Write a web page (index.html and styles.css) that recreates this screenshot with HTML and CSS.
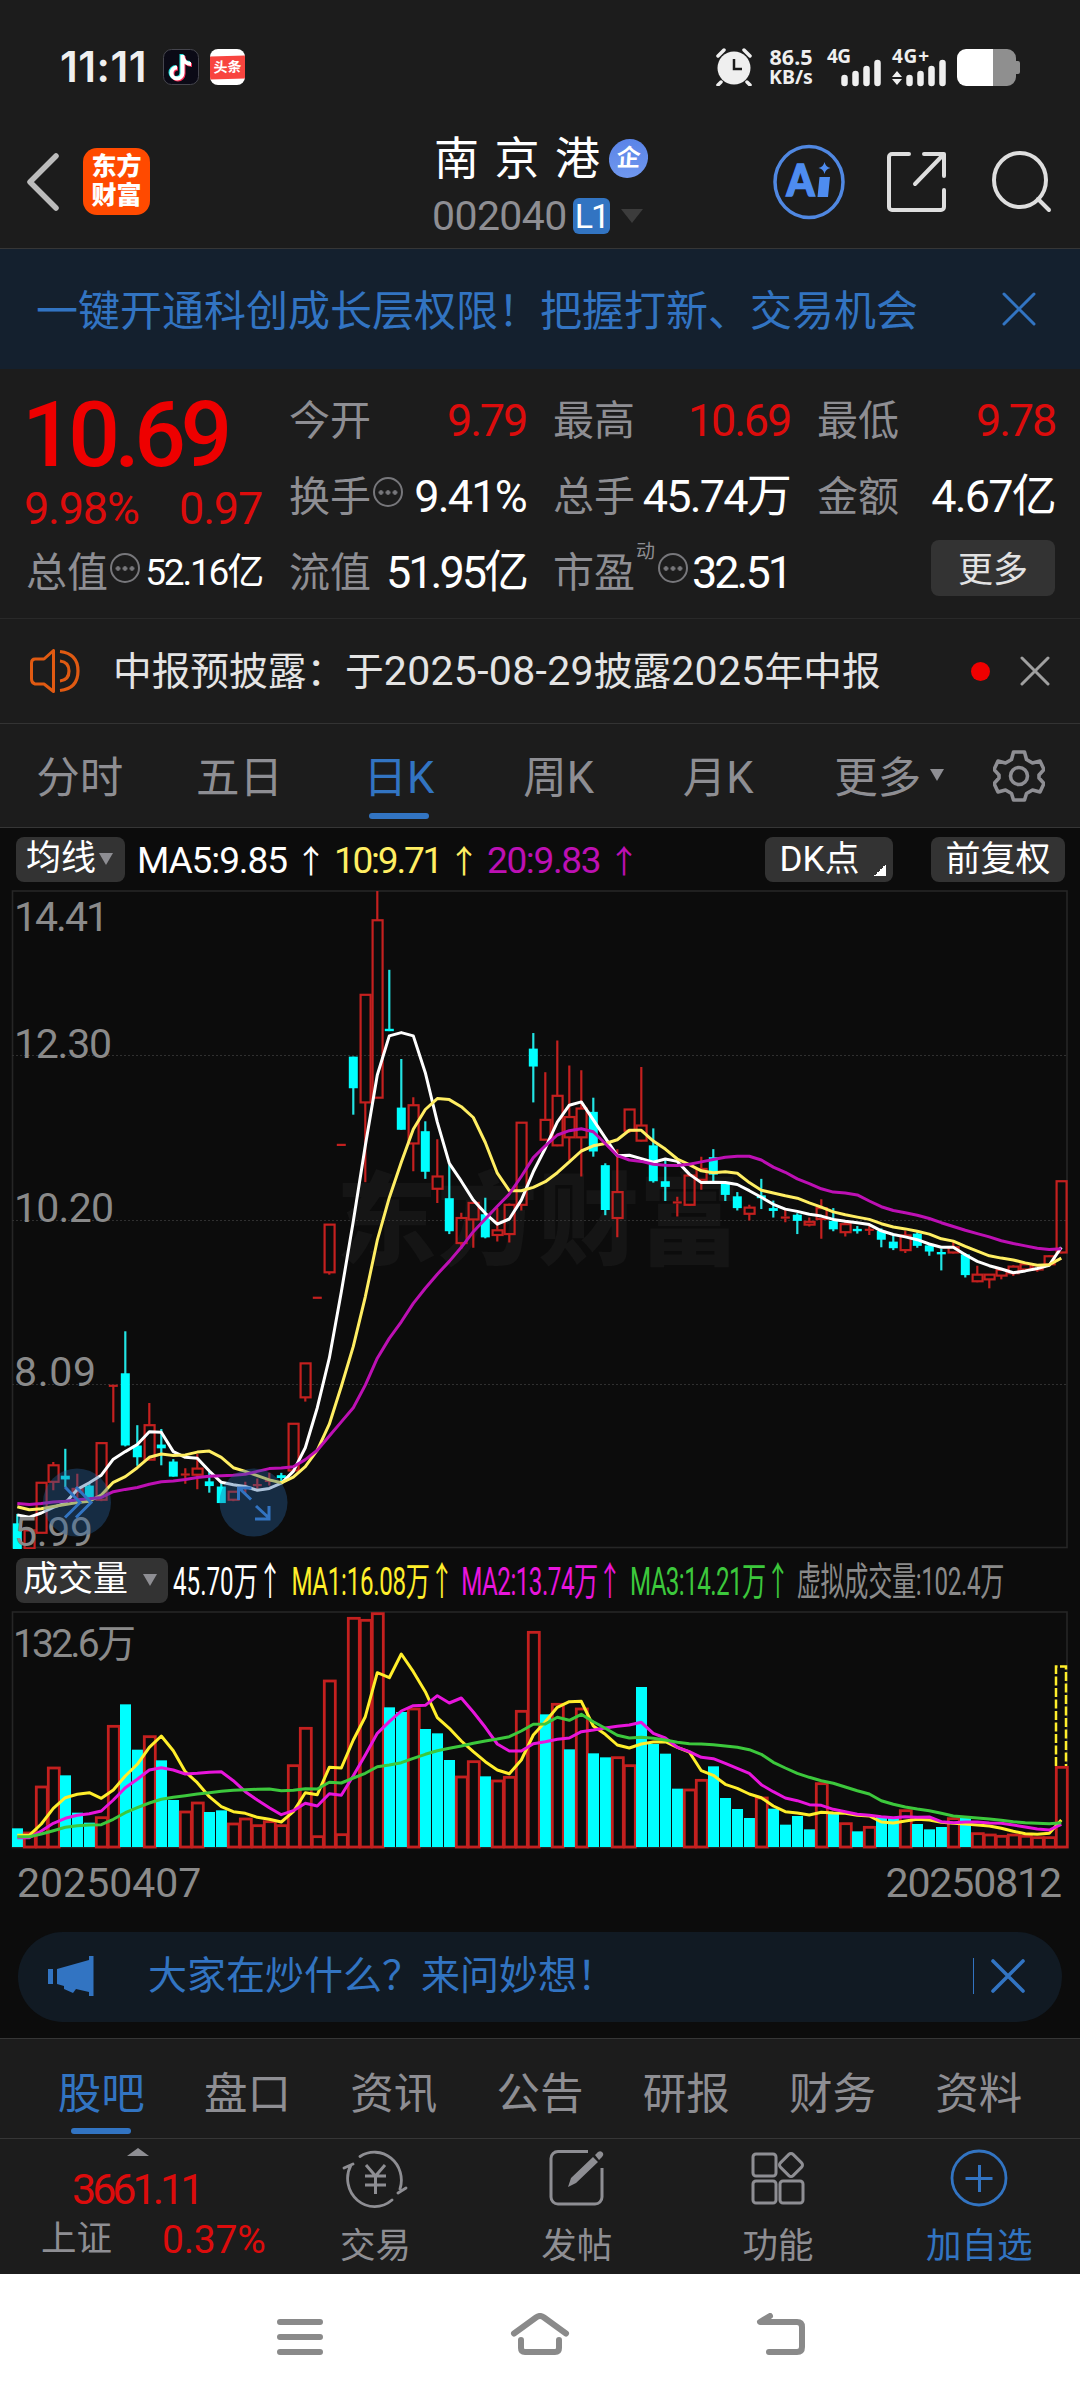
FILE: index.html
```html
<!DOCTYPE html>
<html lang="zh-CN">
<head>
    <meta charset="UTF-8">
    <meta name="viewport" content="width=device-width, initial-scale=1.0">
    <title>南京港 002040</title>
    <link rel="stylesheet" href="styles.css">
</head>
<body>
    <div class="statusbar">
        <span class="clock">11:11</span>
        <svg class="app-icon" width="36" height="36" viewBox="0 0 36 36">
            <rect x="0.5" y="0.5" width="35" height="35" rx="8" fill="#0b0a16" stroke="#45454d"/>
            <g fill="none" stroke-width="4">
                <path d="M18.500 5v18.500a5.500 5.500 0 1 1-5.500-5.500M18.500 6c.5 5 4 8 8.500 8" stroke="#25e5e0"/>
                <path d="M20.500 7v18a5.500 5.500 0 1 1-5.500-5.500M20.500 8c.5 5 4 8 8.500 8" stroke="#fb2c55"/>
                <path d="M19.500 6v18a5.500 5.500 0 1 1-5.500-5.500M19.500 7c.5 5 4 8 8.500 8" stroke="#fff"/>
            </g>
        </svg>
        <span class="toutiao"><b>头条</b></span>
        <div class="status-right">
            <svg width="38" height="38" viewBox="0 0 38 38">
                <circle cx="19" cy="20" r="16.500" fill="#efefef"/>
                <path d="M3 8l6-6M35 8l-6-6M6 34l-3 3M32 34l3 3" stroke="#efefef" stroke-width="3.500" stroke-linecap="round"/>
                <path d="M19 11v10h8" fill="none" stroke="#1c1c1c" stroke-width="2.500"/>
            </svg>
            <div class="speed"><span>86.5</span><span>KB/s</span></div>
            <svg class="sig" width="56" height="38" viewBox="0 0 56 38">
                <text x="0" y="15" class="net" textLength="24">4G</text>
                <path d="M17.500 30v5M28.500 26v9M39.500 21v14M50.500 15v20" stroke="#efefef" stroke-width="6.500" stroke-linecap="round"/>
            </svg>
            <svg class="sig" width="56" height="38" viewBox="0 0 56 38">
                <text x="0" y="15" class="net" textLength="37">4G+</text>
                <path d="M5 23l5 6H0zM5 37l5-6H0z" fill="#efefef"/>
                <path d="M17.500 30v5M28.500 26v9M39.500 21v14M50.500 15v20" stroke="#efefef" stroke-width="6.500" stroke-linecap="round"/>
            </svg>
            <svg width="63" height="37" viewBox="0 0 63 37">
                <path d="M36 0h14a9 9 0 0 1 9 9v3h2a2 2 0 0 1 2 2v9a2 2 0 0 1-2 2h-2v3a9 9 0 0 1-9 9H36z" fill="#8f8f8f"/>
                <path d="M36 0H9a9 9 0 0 0-9 9v19a9 9 0 0 0 9 9h27z" fill="#fff"/>
            </svg>
        </div>
    </div>

    <div class="header">
        <svg class="back" width="34" height="58" viewBox="0 0 34 58"><path d="M30 3L4 29l26 26" fill="none" stroke="#bcbcbc" stroke-width="5.500" stroke-linecap="round" stroke-linejoin="round"/></svg>
        <div class="logo">东方<br>财富</div>
        <div class="title">
            <div class="name"><span>南京港</span><i class="qi">企</i></div>
            <div class="code"><span>002040</span><b>L1</b><svg width="22" height="14" viewBox="0 0 22 14"><path d="M0 0h22L11 14z" fill="#3c3c3c"/></svg></div>
        </div>
        <svg class="ai" width="72" height="76" viewBox="0 0 72 76">
            <ellipse cx="36" cy="38" rx="34" ry="35.500" fill="none" stroke="#5088e2" stroke-width="3.500"/>
            <text x="13.500" y="51.500" class="ai-text" textLength="28" lengthAdjust="spacingAndGlyphs">A</text>
            <path d="M46.500 33H57l-2 20H44.500zM51.500 18q1 5 6 6q-5 1-6 6q-1-5-6-6q5-1 6-6z" fill="#4e8cf0"/>
        </svg>
        <svg class="share" width="60" height="60" viewBox="0 0 60 60"><path d="M22 2H5a3 3 0 0 0-3 3v50a3 3 0 0 0 3 3h49a3 3 0 0 0 3-3V38M37 2h20v22M56 3L28 32" fill="none" stroke="#dedede" stroke-width="4" stroke-linecap="round" stroke-linejoin="round"/></svg>
        <svg class="search" width="60" height="62" viewBox="0 0 60 62"><ellipse cx="28" cy="29" rx="26" ry="27" fill="none" stroke="#dedede" stroke-width="4"/><path d="M46 48l11 11" stroke="#dedede" stroke-width="4" stroke-linecap="round"/></svg>
    </div>

    <div class="promo">
        <span>一键开通科创成长层权限！把握打新、交易机会</span>
        <svg width="34" height="34" viewBox="0 0 34 34"><path d="M2 2l30 30M32 2L2 32" stroke="#3274c2" stroke-width="3" stroke-linecap="round"/></svg>
    </div>

    <div class="quote">
        <div class="quote-main">
            <div class="price">10.69</div>
            <div class="change"><span>9.98%</span><span>0.97</span></div>
            <div class="cell"><label>总值</label><i class="more-dot"></i><b class="small">52.16亿</b></div>
        </div>
        <div class="quote-grid">
            <div class="cell"><label>今开</label><b class="red">9.79</b></div>
            <div class="cell"><label>最高</label><b class="red">10.69</b></div>
            <div class="cell"><label>最低</label><b class="red">9.78</b></div>
            <div class="cell"><label>换手</label><i class="more-dot"></i><b>9.41%</b></div>
            <div class="cell"><label>总手</label><b>45.74万</b></div>
            <div class="cell"><label>金额</label><b>4.67亿</b></div>
            <div class="cell"><label>流值</label><b class="tight">51.95亿</b></div>
            <div class="cell"><label>市盈</label><sup>动</sup><i class="more-dot"></i><b class="tight">32.51</b></div>
            <div class="cell"><button class="more-btn">更多</button></div>
        </div>
    </div>

    <div class="notice">
        <svg width="50" height="44" viewBox="0 0 50 44">
            <path d="M23.500 1.500v41L14 35H5q-3.500-1-3.500-5V14q0-4 3.500-4h9z" fill="none" stroke="#e05a12" stroke-width="3" stroke-linejoin="round"/>
            <path d="M30 12q9 1 9 10t-9 10M30 2.500q18 2 18 19.500T30 41.500" fill="none" stroke="#e05a12" stroke-width="3.200"/>
        </svg>
        <span class="notice-text">中报预披露：于<em>2025-08-29</em>披露<em>2025</em>年中报</span>
        <i class="dot"></i>
        <svg width="30" height="30" viewBox="0 0 30 30"><path d="M2 2l26 26M28 2L2 28" stroke="#a0a0a0" stroke-width="3" stroke-linecap="round"/></svg>
    </div>

    <div class="tabs">
        <a>分时</a>
        <a>五日</a>
        <a class="active">日K</a>
        <a>周K</a>
        <a>月K</a>
        <a>更多<i class="caret"></i></a>
        <svg width="52" height="52" viewBox="0 0 52 52">
            <path d="M20.500 2h11l2 7.500 6 3.500 7.500-2 4 8.500-5 5.500v3l5 5.500-4 8.500-7.500-2-6 3.500-2 6.500h-11l-2-6.500-6-3.500-7.500 2-4-8.500 5-5.500v-3l-5-5.500 4-8.500 7.500 2 6-3.500z" fill="none" stroke="#8e8e93" stroke-width="3.600" stroke-linejoin="round"/>
            <circle cx="26" cy="26" r="8.500" fill="none" stroke="#8e8e93" stroke-width="3.600"/>
        </svg>
    </div>

    <div class="chart-area">
        <div class="ma-bar">
            <button class="pick">均线<i></i></button>
            <svg class="ma-values" width="520" height="62">
                <text x="0" y="45" textLength="190" fill="#fff">MA5:9.85 <tspan>↑</tspan></text>
                <text x="197" y="45" textLength="146" fill="#ffee63">10:9.71 <tspan>↑</tspan></text>
                <text x="350" y="45" textLength="153" fill="#bd10b4">20:9.83 <tspan>↑</tspan></text>
            </svg>
            <button class="dk">DK点</button>
            <button class="fq">前复权</button>
        </div>
        <svg id="kline" width="1080" height="659"></svg>
        <div class="vol-bar">
            <button class="pick">成交量<i></i></button>
            <svg class="vol-values" width="880" height="62">
                <g transform="scale(.62 1)">
                    <text x="8" y="46" textLength="176" fill="#fff">45.70万↑</text>
                    <text x="199" y="46" textLength="262" fill="#ffee2b">MA1:16.08万↑</text>
                    <text x="473" y="46" textLength="259" fill="#e815dc">MA2:13.74万↑</text>
                    <text x="745" y="46" textLength="258" fill="#3cc83c">MA3:14.21万↑</text>
                    <text x="1014" y="46" textLength="335" fill="#8a8a8a">虚拟成交量:102.4万</text>
                </g>
            </svg>
        </div>
        <svg id="volume" width="1080" height="239"></svg>
        <div class="dates"><span>20250407</span><span class="last">20250812</span></div>
        <div class="ask">
            <svg width="46" height="40" viewBox="0 0 46 40"><path d="M0 13h5v15H0zM9 13L41 4V0h4.500v40H41v-4l-13-3-3 4-9-4v-3l-7-2z" fill="#3274c2"/></svg>
            <span>大家在炒什么？来问妙想！</span>
            <i class="line"></i>
            <svg width="34" height="34" viewBox="0 0 34 34"><path d="M2 2l30 30M32 2L2 32" stroke="#3274c2" stroke-width="3.600" stroke-linecap="round"/></svg>
        </div>
    </div>

    <div class="tabs info-tabs">
        <a class="active">股吧</a>
        <a>盘口</a>
        <a>资讯</a>
        <a>公告</a>
        <a>研报</a>
        <a>财务</a>
        <a>资料</a>
    </div>

    <div class="bottom">
        <div class="index">
            <svg width="22" height="8" viewBox="0 0 22 8"><path d="M11 0l11 8H0z" fill="#8e8e93"/></svg>
            <div class="index-value">3661.11</div>
            <div class="index-row"><span>上证</span><b>0.37%</b></div>
        </div>
        <div class="action">
            <svg width="66" height="60" viewBox="0 0 66 60">
                <path d="M18 8.500A27 28 0 0 1 58 41M50 52A27 28 0 0 1 9 17M2 20l9-4M64 40l-8 5" fill="none" stroke="#8e8e93" stroke-width="2.800" stroke-linecap="round"/>
                <path d="M24 17l9.500 11L43 17M23 28h21M23 37h21M33.500 28v18" fill="none" stroke="#8e8e93" stroke-width="3"/>
            </svg>
            <span>交易</span>
        </div>
        <div class="action">
            <svg width="56" height="58" viewBox="0 0 56 58">
                <path d="M39 2.500H9a7 7 0 0 0-7 7V48a7 7 0 0 0 7 7h37a7 7 0 0 0 7-7V19" fill="none" stroke="#8e8e93" stroke-width="3"/>
                <path d="M19 38l3-9 22-21 5 5-22 21zM46 6l3-3q3-2 5 1 1 2-1 4l-3 3z" fill="#8e8e93"/>
            </svg>
            <span>发帖</span>
        </div>
        <div class="action">
            <svg width="54" height="58" viewBox="0 0 54 58">
                <g fill="none" stroke="#8e8e93" stroke-width="3">
                    <rect x="2" y="5" width="23" height="22" rx="3"/>
                    <rect x="2" y="32" width="23" height="22" rx="3"/>
                    <rect x="29" y="32" width="23" height="22" rx="3"/>
                    <rect x="31" y="7" width="18" height="18" rx="3" transform="rotate(45 40 16)"/>
                </g>
            </svg>
            <span>功能</span>
        </div>
        <div class="action add">
            <svg width="58" height="58" viewBox="0 0 58 58"><circle cx="29" cy="29" r="27" fill="none" stroke="#3274c2" stroke-width="2.800"/><path d="M15.500 29.500h27M29.500 16v27" stroke="#3274c2" stroke-width="3"/></svg>
            <span>加自选</span>
        </div>
    </div>

    <div class="navbar">
        <svg width="48" height="48" viewBox="0 0 48 48"><path d="M4 9h40M4 24h40M4 39h40" stroke="#8a8a8a" stroke-width="6" stroke-linecap="round"/></svg>
        <svg width="60" height="48" viewBox="0 0 60 48"><path d="M4 20.500L26 4.500q4-3 8 0l22 16M11 27v8q0 4 4 4h30q4 0 4-4v-8" fill="none" stroke="#8a8a8a" stroke-width="6" stroke-linecap="round"/></svg>
        <svg width="50" height="48" viewBox="0 0 50 48"><path d="M14 3L4 9h37q5 0 5 5v20q0 5-5 5H13" fill="none" stroke="#8a8a8a" stroke-width="6" stroke-linecap="round" stroke-linejoin="round"/></svg>
    </div>

    <script src="chart.js"></script>
</body>
</html>
```

FILE: styles.css
```css
* {
    box-sizing: border-box;
}
body {
    margin: 0;
    width: 1080px;
    background-color: #1c1c1c;
    color: #fff;
    font-family: Roboto, "Noto Sans CJK SC", sans-serif;
    line-height: 1;
}
svg {
    display: block;
    flex: none;
}
i,
em {
    font-style: normal;
}
button {
    font-family: inherit;
    color: #fff;
    background-color: #333;
    border: none;
    border-radius: 8px;
    padding: 0;
}

/* status bar */
.statusbar {
    height: 98px;
    padding: 36px 60px 0 60px;
    display: flex;
    align-items: center;
}
.clock {
    width: 103px;
    font-family: Inter, sans-serif;
    font-weight: 600;
    font-size: 42px;
    letter-spacing: 0.5px;
    color: #efefef;
}
.app-icon {
    margin-right: 11px;
}
.toutiao {
    width: 35px;
    height: 36px;
    border-radius: 8px;
    background-color: #fff;
    display: flex;
    align-items: center;
    overflow: hidden;
}
.toutiao b {
    width: 35px;
    height: 23px;
    background-color: #f8443f;
    font-size: 14px;
    line-height: 22px;
    text-align: center;
    transform: skewY(-2deg);
}
.status-right {
    margin-left: auto;
    display: flex;
    align-items: center;
}
.speed {
    width: 48px;
    margin: 0 12px 0 14px;
    font-family: "Noto Sans", sans-serif;
    font-weight: 700;
    font-size: 21.5px;
    line-height: 20px;
    text-align: center;
    color: #efefef;
}
.speed span {
    display: block;
}
.speed span + span {
    font-size: 19.5px;
}
.sig {
    margin-right: 9px;
    overflow: visible;
}
.net {
    font: 700 19px "Noto Sans", sans-serif;
    fill: #efefef;
}

/* header */
.header {
    height: 151px;
    border-bottom: 1px solid #363636;
    display: flex;
    align-items: center;
    padding: 17px 28px 0 26px;
}
.logo {
    width: 67px;
    height: 67px;
    margin-left: 23px;
    border-radius: 14px;
    background-color: #ff4a00;
    font-size: 25px;
    font-weight: 900;
    line-height: 29px;
    padding-top: 4px;
    text-align: center;
}
.title {
    margin-left: 282px;
    margin-top: 11px;
    width: 230px;
}
.name {
    display: flex;
    align-items: center;
    height: 58px;
    font-size: 45px;
    letter-spacing: 15.5px;
}
.name span {
    margin-left: 2px;
    margin-top: 2px;
}
.qi {
    width: 39px;
    height: 39px;
    margin-left: -7px;
    border-radius: 50%;
    background: linear-gradient(#5a84e8, #7097ee);
    font-size: 24px;
    line-height: 38px;
    letter-spacing: 0;
    text-align: center;
    font-weight: 700;
    transform: skewX(-4deg);
}
.code {
    display: flex;
    align-items: center;
    height: 58px;
    font-size: 41px;
    color: #8e8e93;
}
.code span {
    width: 141px;
    letter-spacing: -0.6px;
}
.code b {
    width: 37px;
    height: 36px;
    border-radius: 6px;
    background-color: #3274c2;
    color: #fff;
    font-weight: 400;
    font-size: 34px;
    line-height: 37px;
    letter-spacing: -2px;
    text-align: center;
    margin-right: 11px;
}
.ai {
    margin-left: 111px;
}
.ai-text {
    font: 900 44px Lato, sans-serif;
    fill: #4e8cf0;
    stroke: #4e8cf0;
    stroke-width: 1.5px;
}
.share {
    margin-left: 42px;
}
.search {
    margin-left: auto;
}

/* promo */
.promo {
    height: 120px;
    padding: 0 44px 0 36px;
    display: flex;
    align-items: center;
    justify-content: space-between;
    background-color: #14202e;
    color: #3274c2;
    font-size: 42px;
}
.promo span {
    padding-top: 5px;
}

/* quote */
.quote {
    height: 250px;
    padding: 13px 25px 0 26px;
    border-bottom: 1px solid #292929;
    display: flex;
    gap: 27px;
}
.quote-main {
    width: 237px;
}
.price {
    height: 96px;
    margin-left: -4px;
    line-height: 107px;
    font-size: 91px;
    font-weight: 500;
    letter-spacing: -5.5px;
    color: #ee0000;
}
.change {
    height: 56px;
    margin-left: -2px;
    line-height: 61px;
    font-size: 45px;
    letter-spacing: -1.2px;
    color: #dc0c0c;
    display: flex;
    justify-content: space-between;
}
.quote-grid {
    flex: 1;
    display: grid;
    grid-template-columns: 237px 237px 238px;
    grid-template-rows: 76px 76px 73px;
    column-gap: 27px;
}
.cell {
    height: 76px;
    display: flex;
    align-items: center;
    position: relative;
}
.cell label {
    padding-top: 2px;
    font-size: 41px;
    color: #8e8e93;
    white-space: nowrap;
}
.cell b {
    margin-left: auto;
    font-weight: 400;
    font-size: 45px;
    letter-spacing: -1.8px;
    white-space: nowrap;
}
.cell .red {
    color: #dc0c0c;
    letter-spacing: -2.2px;
}
.cell .tight {
    letter-spacing: -3px;
}
.cell .small {
    font-size: 37px;
    letter-spacing: -2.2px;
}
.cell sup {
    position: absolute;
    left: 83px;
    top: 8px;
    font-size: 19px;
    color: #8e8e93;
}
.cell sup + .more-dot {
    margin-left: 23px;
}
.more-dot {
    flex: none;
    width: 30px;
    height: 30px;
    margin-top: -8px;
    margin-left: 2px;
    border: 2px solid #77777b;
    border-radius: 50%;
    background: radial-gradient(circle, #77777b 2px, transparent 2.5px) center / 7px 7px repeat-x;
    background-clip: content-box;
    padding: 0 3px;
}
.more-btn {
    width: 124px;
    height: 56px;
    margin-left: auto;
    margin-top: -8px;
    padding-bottom: 3px;
    font-size: 35px;
    color: #e2e2e2;
}

/* notice */
.notice {
    height: 105px;
    padding: 0 30px 0 30px;
    border-bottom: 1px solid #333;
    display: flex;
    align-items: center;
}
.notice-text {
    margin-left: 33px;
    font-size: 38.7px;
    color: #e4e4e4;
    white-space: nowrap;
}
.notice-text em {
    font-size: 41px;
    letter-spacing: 0.3px;
}
.dot {
    width: 19px;
    height: 19px;
    margin-left: auto;
    margin-right: 30px;
    border-radius: 50%;
    background-color: #f00000;
}

/* tabs */
.tabs {
    height: 104px;
    border-bottom: 1px solid #363636;
    display: flex;
    align-items: center;
}
.tabs a {
    width: 159.6px;
    height: 103px;
    line-height: 109px;
    text-align: center;
    font-size: 43.5px;
    color: #8e8e93;
    position: relative;
}
.tabs .active {
    color: #3274c2;
}
.tabs .active::after {
    content: "";
    position: absolute;
    left: calc(50% - 30px);
    bottom: 8px;
    width: 60px;
    height: 6px;
    border-radius: 3px;
    background-color: #3274c2;
}
.caret {
    position: absolute;
    right: 14px;
    top: 45px;
    border: 7.5px solid transparent;
    border-top: 12px solid #8e8e93;
    border-bottom: none;
}
.tabs svg {
    margin-left: 35px;
}
.info-tabs {
    height: 101px;
    padding: 0 28px;
    border-top: 1px solid #363636;
}
.info-tabs a {
    width: 146.4px;
    height: 99px;
    line-height: 111px;
}
.info-tabs .active::after {
    bottom: 4px;
}

/* chart */
.chart-area {
    height: 1210px;
    background-color: #0c0c0c;
}
.ma-bar,
.vol-bar {
    height: 62px;
    padding-left: 16px;
    padding-right: 15px;
    display: flex;
    align-items: center;
}
.ma-bar button,
.vol-bar button {
    height: 45px;
    font-size: 35px;
    line-height: 46px;
}
.ma-bar .pick {
    width: 109px;
    display: flex;
    align-items: center;
    padding-left: 10px;
}
.pick i {
    margin-left: 3px;
    border: 7.5px solid transparent;
    border-top: 12px solid #8e8e93;
    border-bottom: none;
}
.vol-bar .pick {
    width: 152px;
    display: flex;
    align-items: center;
    padding-left: 7px;
}
.vol-bar .pick i {
    margin-left: 15px;
}
.ma-values {
    margin-left: 12px;
    font-size: 37px;
}
.ma-values tspan {
    font-size: 32px;
}
.ma-bar .dk {
    width: 128px;
    margin-left: auto;
    padding-right: 19px;
    background: linear-gradient(135deg, transparent 50%, #fff 50%) 109px 27px / 12px 12px no-repeat #333;
}
.ma-bar .fq {
    width: 134px;
    margin-left: 38px;
}
.vol-values {
    font-size: 39px;
}
.axis {
    fill: #8a8a8a;
    font-size: 41px;
}
.axis-vol {
    font-size: 39px;
}
.watermark {
    fill: #151515;
    font-size: 101px;
    font-weight: 900;
}
.dates {
    height: 82px;
    padding: 13px 19px 0 17px;
    display: flex;
    justify-content: space-between;
    font-size: 41px;
    line-height: 41px;
    color: #8a8a8a;
}
.dates .last {
    letter-spacing: -1.1px;
}
.ask {
    height: 90px;
    margin: 0 18px;
    padding: 0 37px 2px 30px;
    border-radius: 45px;
    background-color: #111a23;
    display: flex;
    align-items: center;
    color: #3274c2;
    font-size: 39px;
}
.ask span {
    margin-left: 54px;
}
.line {
    width: 1px;
    height: 36px;
    margin-left: auto;
    margin-right: 17px;
    background-color: #3274c2;
}

/* bottom bar */
.bottom {
    height: 135px;
    display: flex;
}
.index {
    width: 275px;
}
.index svg {
    margin: 9px 0 0 127px;
}
.index-value {
    height: 50px;
    margin-top: 8px;
    margin-bottom: 3px;
    padding-left: 72px;
    font-size: 43px;
    line-height: 50px;
    letter-spacing: -4px;
    color: #dc0c0c;
}
.index-row {
    display: flex;
    align-items: center;
    height: 46px;
    padding-left: 41px;
    font-size: 35.5px;
    color: #8e8e93;
}
.index-row b {
    margin-left: 50px;
    font-weight: 400;
    font-size: 39px;
    letter-spacing: -0.2px;
    color: #dc0c0c;
}
.action {
    width: 201.5px;
    padding-top: 9px;
    display: flex;
    flex-direction: column;
    align-items: center;
    color: #8e8e93;
    font-size: 35.5px;
}
.action svg {
    height: 60px;
}
.action span {
    margin-top: 21px;
}
.add {
    color: #3274c2;
}

/* system navigation */
.navbar {
    height: 126px;
    padding: 39px 0 0 276px;
    background-color: #fff;
    display: flex;
    gap: 186px;
}
```

FILE: chart.js
```js
const STEP = 12;
const X0 = 17.3;
const RED = '#c4201f';
const CYAN = '#00ffff';

// [high, body top, body bottom, low, 1 = up / 0 = down], counted down from the top of the scale
const candles = [
    [1470,1490,1545,1545,0],[1505,1505,1543,1543,1],[1404,1404,1510,1510,1],[1360,1367,1402,1420,1],[1332,1389,1397,1413,0],
    [1385,1417,1423,1440,1],[1405,1410,1435,1438,0],[1320,1320,1440,1443,1],[1198,1198,1199,1276,1],[1083,1172,1325,1327,0],
    [1282,1325,1350,1368,0],[1235,1282,1355,1355,1],[1290,1323,1331,1367,0],[1354,1359,1391,1391,0],[1373,1385,1388,1406,1],
    [1343,1374,1387,1418,1],[1380,1401,1411,1425,0],[1405,1412,1447,1447,0],[1423,1423,1440,1443,1],[1402,1412,1415,1428,1],
    [1395,1407,1411,1418,1],[1383,1398,1402,1410,1],[1383,1388,1394,1405,0],[1279,1279,1378,1378,1],[1151,1151,1223,1232,1],
    [1012,1012,1012,1012,1],[857,857,958,963,1],[688,688,688,688,1],[501,501,568,624,0],[370,370,598,767,1],
    [150,212,588,588,1],[317,442,447,447,0],[506,609,656,656,0],[587,604,685,744,1],[638,659,745,760,0],
    [676,755,781,811,1],[730,801,871,877,0],[832,843,896,908,1],[811,811,846,906,1],[800,835,884,886,0],
    [822,869,879,893,1],[812,815,877,895,1],[641,641,815,827,1],[451,484,522,598,0],[534,635,677,677,1],
    [467,584,689,691,1],[520,629,672,720,1],[530,611,672,755,1],[588,618,702,713,0],[727,731,826,837,0],
    [697,788,843,884,1],[613,613,658,663,1],[523,647,679,681,1],[653,689,765,768,0],[720,765,777,807,0],
    [798,808,812,840,1],[753,753,815,817,1],[713,739,762,783,1],[697,714,751,769,0],[768,768,794,807,0],
    [788,797,822,827,0],[815,821,834,848,1],[760,795,801,824,0],[806,822,828,842,0],[822,840,844,852,1],
    [833,836,849,877,0],[842,851,857,861,1],[803,822,845,887,1],[822,849,867,871,0],[850,856,873,882,1],
    [860,866,871,876,0],[860,866,870,879,1],[865,870,889,905,0],[880,893,907,911,0],[870,880,911,917,1],
    [873,876,902,906,0],[897,901,914,923,0],[908,915,920,954,0],[893,905,916,918,1],[917,920,964,969,0],
    [944,963,977,979,1],[963,963,973,992,1],[953,953,965,973,1],[943,946,960,966,1],[941,941,952,954,1],
    [941,943,952,957,1],[922,924,941,941,1],[765,765,916,918,1]
];
const ma5 = [1472,1477,1468,1456,1447,1418,1404,1388,1354,1338,1323,1296,1297,1338,1350,1352,1379,1403,1408,1412,1420,1416,1405,1380,1330,1245,1140,1000,850,690,540,457,450,457,535,640,727,765,805,833,856,845,805,745,695,640,604,597,635,673,711,710,717,725,718,723,750,768,767,768,772,785,799,814,824,829,835,839,846,850,853,857,870,878,883,889,898,905,905,921,935,944,951,959,955,950,943,905];
const ma10 = [1455,1461,1459,1454,1450,1446,1443,1430,1403,1391,1372,1350,1343,1346,1345,1339,1337,1350,1372,1380,1389,1398,1404,1392,1370,1335,1280,1200,1115,1010,890,800,725,655,613,590,592,607,630,683,748,785,785,778,766,747,724,701,690,685,677,657,657,680,697,718,730,743,747,745,748,768,784,790,796,801,811,820,830,836,841,846,855,862,866,871,877,887,892,903,913,923,928,932,938,943,942,928];
const ma20 = [1448,1450,1448,1445,1443,1440,1438,1435,1423,1418,1414,1407,1402,1400,1397,1393,1390,1389,1388,1386,1380,1374,1373,1370,1355,1335,1305,1275,1245,1197,1140,1098,1063,1024,992,962,935,905,872,845,818,792,755,715,690,667,658,654,660,685,711,720,723,729,731,732,729,724,719,714,712,712,720,735,746,760,770,781,788,790,794,807,819,827,832,837,844,853,861,869,876,883,891,897,902,907,910,908];

const volumes = [865,876,738,681,706,818,848,830,556,493,629,587,661,780,813,786,816,811,849,834,854,842,854,674,562,887,420,881,232,238,218,502,516,504,567,580,660,708,662,709,720,709,511,274,523,490,628,504,640,652,650,674,441,612,641,746,747,718,679,774,807,834,771,806,854,828,868,728,820,848,874,859,828,832,809,852,868,861,833,833,878,882,886,882,886,890,890,679];
const volDown = [0,4,5,6,9,10,12,13,16,17,31,32,34,35,36,39,44,46,48,49,52,53,54,55,58,59,60,61,63,64,65,66,68,70,72,73,75,76,77,79];
const vma1 = [886,886,852,805,773,763,758,775,750,708,673,622,588,632,695,728,770,800,815,820,832,838,846,815,758,764,682,684,600,530,398,413,342,395,455,533,565,603,635,665,690,701,660,585,545,502,485,484,558,583,615,624,612,606,605,622,636,692,706,733,745,762,773,798,815,819,825,817,819,820,826,828,846,849,843,838,840,847,850,852,855,858,865,874,881,883,880,840];
const vma2 = [893,893,873,850,835,826,821,813,780,743,718,690,683,690,702,700,697,695,722,755,780,803,824,812,790,798,761,766,707,645,580,545,513,497,496,467,489,474,516,562,612,633,633,611,605,598,594,575,570,564,559,555,547,580,594,622,635,652,656,670,685,700,734,755,774,782,794,796,808,815,823,826,830,833,830,832,831,845,848,846,846,849,850,855,861,867,870,853];
const vma3 = [890,890,882,872,862,857,855,854,838,818,803,789,778,772,767,762,758,754,751,749,748,747,752,751,746,747,727,729,714,700,680,675,668,655,643,632,625,618,610,603,597,590,573,553,552,532,541,523,545,565,586,594,592,595,600,607,611,612,614,618,622,629,643,667,684,700,712,722,730,741,752,762,782,793,801,807,812,820,828,831,834,837,841,845,848,850,851,848];

const x = i => X0 + STEP * i;
const ky = v => 1 + (v - 150) * 0.4719;
const vy = v => (v - 213) / 3;

function line(data, y, color) {
    const pts = data.map((v, i) => x(i).toFixed(1) + ',' + y(v).toFixed(1)).join(' ');
    return `<polyline points="${pts}" fill="none" stroke="${color}" stroke-width="3" stroke-linejoin="round"/>`;
}

function drawKline() {
    let s = '<text x="336" y="367" class="watermark">东方财富</text>';
    s += '<rect x="12.5" y="1" width="1054.500" height="656.500" fill="none" stroke="#262626" stroke-width="1.600"/>';
    [165, 330, 494].forEach(y => {
        s += `<path d="M12 ${y}.5H1067" stroke="#303030" stroke-dasharray="2 2"/>`;
    });
    candles.forEach((c, i) => {
        const [high, top, bottom, low, up] = c;
        const cx = x(i);
        const h = ky(bottom) - ky(top);
        if (up) {
            s += `<path d="M${cx} ${ky(high)}V${ky(top)}M${cx} ${ky(bottom)}V${ky(low)}" stroke="${RED}" stroke-width="2.2"/>`;
            if (h < 2.5) {
                s += `<path d="M${cx - 4.5} ${ky(top) + h / 2}h9" stroke="${RED}" stroke-width="2.2"/>`;
            } else {
                s += `<rect x="${cx - 4.7}" y="${ky(top)}" width="10" height="${h}" fill="none" stroke="${RED}" stroke-width="2.2"/>`;
            }
        } else {
            s += `<path d="M${cx} ${ky(high)}V${ky(low)}" stroke="#22e4e4" stroke-width="2.2"/>`;
            s += `<rect x="${cx - 4.5}" y="${ky(top)}" width="9" height="${h}" fill="${CYAN}"/>`;
        }
    });
    s += line(ma5, ky, '#fff') + line(ma10, ky, '#ffee63') + line(ma20, ky, '#bd10b4');
    // price labels: text, baseline, width
    [['14.41', 41, 95], ['12.30', 168, 98], ['10.20', 332, 100], ['8.09', 496, 82], ['5.99', 656, 79]].forEach(l => {
        s += `<text x="14" y="${l[1]}" textLength="${l[2]}" class="axis">${l[0]}</text>`;
    });
    s += '<g fill="none" stroke="#3274c2" stroke-width="3">' +
        '<circle cx="77" cy="612.500" r="34" fill="#28619f" fill-opacity=".38" stroke="none"/>' +
        '<circle cx="253.500" cy="612.500" r="34" fill="#28619f" fill-opacity=".38" stroke="none"/>' +
        '<path d="M65 597l15 15.500-15 15M76 597l15 15.500-15 15"/>' +
        '<path d="M238.500 610v-12h13M239 598l12 11.500M255 629h14v-13M269 628l-13-12"/></g>';
    document.getElementById('kline').innerHTML = s;
}

function drawVolume() {
    let s = '<rect x="12.5" y="1" width="1054.500" height="235.500" fill="none" stroke="#262626" stroke-width="1.600"/>';
    volumes.forEach((v, i) => {
        const cx = x(i);
        const y = vy(v);
        if (volDown.includes(i)) {
            s += `<rect x="${cx - 5.3}" y="${y}" width="11" height="${236 - y}" fill="${CYAN}"/>`;
        } else {
            s += `<rect x="${cx - 5}" y="${y + 1}" width="11" height="${235 - y}" fill="none" stroke="${RED}" stroke-width="2.8"/>`;
        }
    });
    s += '<path d="M1056 155V55.500H1066V155" fill="none" stroke="#ffee2b" stroke-width="2.500" stroke-dasharray="9 2.500"/>';
    s += line(vma1, vy, '#ffee2b') + line(vma2, vy, '#e815dc') + line(vma3, vy, '#3cc83c');
    s += '<text x="13" y="46" textLength="123" class="axis axis-vol">132.6万</text>';
    document.getElementById('volume').innerHTML = s;
}

drawKline();
drawVolume();
```
